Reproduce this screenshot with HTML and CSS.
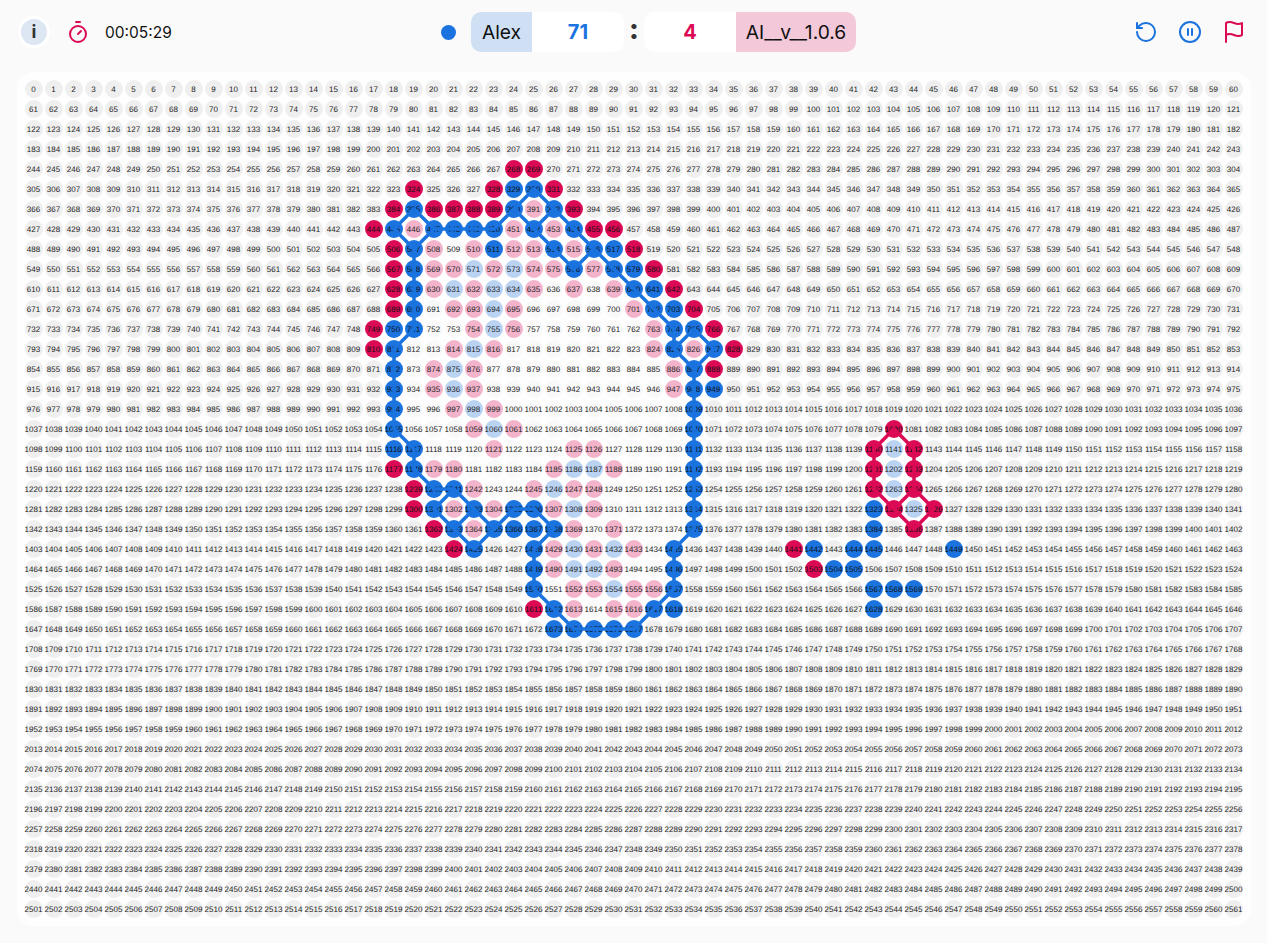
FILE: index.html
```html
<!DOCTYPE html>
<html lang="en">
<head>
<meta charset="utf-8">
<title>Dots</title>
<link rel="stylesheet" href="styles.css">
</head>
<body>
<header class="topbar">
  <div class="status">
    <button class="info-btn" type="button">i</button>
    <svg class="icon icon-red timer" viewBox="0 0 24 24"><line x1="10" x2="14" y1="2" y2="2"/><line x1="12" x2="15" y1="14" y2="11"/><circle cx="12" cy="14" r="8"/></svg>
    <span class="clock">00:05:29</span>
  </div>
  <div class="score">
    <span class="turn-dot"></span>
    <div class="player player-left">
      <span class="name name-blue">Alex</span>
      <span class="points points-blue">71</span>
    </div>
    <span class="colon">:</span>
    <div class="player player-right">
      <span class="points points-red">4</span>
      <span class="name name-red">AI__v__1.0.6</span>
    </div>
  </div>
  <div class="actions">
    <svg class="icon icon-blue" viewBox="0 0 24 24"><path d="M3 12a9 9 0 1 0 9-9 9.75 9.75 0 0 0-6.74 2.74L3 8"/><path d="M3 3v5h5"/></svg>
    <svg class="icon icon-blue" viewBox="0 0 24 24"><circle cx="12" cy="12" r="10"/><line x1="10" x2="10" y1="15" y2="9"/><line x1="14" x2="14" y1="15" y2="9"/></svg>
    <svg class="icon icon-red" viewBox="0 0 24 24"><path d="M4 15s1-1 4-1 5 2 8 2 4-1 4-1V3s-1 1-4 1-5-2-8-2-4 1-4 1z"/><line x1="4" x2="4" y1="22" y2="15"/></svg>
  </div>
</header>
<main class="board">
  <div class="grid" id="grid">
    <svg class="links" id="links" width="1218" height="838" viewBox="0 0 1218 838"></svg>
  </div>
</main>
<script src="board.js"></script>
</body>
</html>
```

FILE: styles.css
```css
* { box-sizing: border-box; }
html, body { margin: 0; height: 100%; }
body {
  background: #fafafa;
  color: #111;
  font-family: Inter, "Liberation Sans", sans-serif;
  overflow: hidden;
}
.topbar {
  display: flex;
  align-items: center;
  justify-content: space-between;
  height: 64px;
  padding: 0 21px 0 18px;
}
.status { display: flex; align-items: center; width: 145px; }
.info-btn {
  flex: none;
  width: 32px;
  height: 32px;
  padding: 0;
  border: 3px solid #fff;
  border-radius: 50%;
  background: #dde6f3;
  color: #333;
  font: 700 18px/1 Inter, sans-serif;
}
.icon {
  width: 24px;
  height: 24px;
  flex: none;
  fill: none;
  stroke-width: 2;
  stroke-linecap: round;
  stroke-linejoin: round;
}
.icon-red { stroke: #dc0a55; }
.icon-blue { stroke: #1a73de; }
.timer { margin-left: 16px; }
.clock { flex: none; margin-left: 15px; font-size: 15.5px; white-space: nowrap; }
.score { display: flex; align-items: center; }
.turn-dot {
  width: 15px;
  height: 15px;
  margin-right: 15px;
  border-radius: 50%;
  background: #1a73de;
}
.player {
  display: flex;
  height: 40px;
  align-items: stretch;
  border-radius: 10px;
  overflow: hidden;
  background: #fff;
}
.name {
  display: flex;
  align-items: center;
  justify-content: center;
  font-size: 19.2px;
}
.name-blue { width: 61px; background: #cfe0f4; }
.name-red { width: 120px; background: #f3c8d9; }
.points {
  display: flex;
  width: 92px;
  align-items: center;
  justify-content: center;
  font-size: 20px;
  font-weight: 700;
}
.points-blue { color: #1a73de; }
.points-red { color: #dc0a55; }
.colon {
  width: 20px;
  height: 40px;
  text-align: center;
  color: #333;
  font-size: 28px;
  font-weight: 800;
  line-height: 34px;
}
.actions { display: flex; gap: 20px; }
.board {
  width: 1234px;
  height: 854px;
  margin: 8px 0 0 16.5px;
  padding: 8px;
  border-radius: 16px;
  background: #fefefe;
}
.grid {
  position: relative;
  display: grid;
  grid-template-columns: repeat(61, 18px);
  grid-auto-rows: 18px;
  gap: 2px;
}
.dot {
  display: flex;
  align-items: center;
  justify-content: center;
  border-radius: 50%;
  background: #efefef;
  color: #222;
  font-family: "Liberation Sans", Arial, sans-serif;
  font-size: 8px;
  text-rendering: geometricPrecision;
  white-space: nowrap;
}
.dot-inside { background: #f9f9f9; }
.dot-blue { background: #1a73de; color: #111; }
.dot-red { background: #dc0a55; color: #111; }
.dot-lost-blue { background: #bad3f3; }
.dot-lost-red { background: #f3b4cb; }
.links {
  position: absolute;
  inset: 0;
  pointer-events: none;
}
.link { stroke-width: 3.5; stroke-linecap: round; }
.link-blue { stroke: #1a73de; }
.link-red { stroke: #dc0a55; }
```

FILE: board.js
```js
var COLS = 61, TOTAL = 2562, PITCH = 20;

var blue = [329,330,385,390,392,445,447,448,449,450,452,454,507,511,514,516,517,568,576,578,579,629,640,641,690,702,703,750,751,764,765,811,825,827,872,887,933,948,949,994,1009,1055,1070,1116,1117,1131,1178,1192,1240,1241,1253,1301,1303,1305,1306,1314,1363,1365,1366,1367,1368,1375,1425,1428,1435,1489,1496,1550,1557,1612,1617,1618,1673,1674,1675,1676,1677,1323,1384,1442,1444,1445,1449,1504,1505,1567,1568,1569,1628];
var red = [268,269,324,328,331,384,386,387,388,389,393,444,455,456,506,518,567,580,628,642,689,704,749,766,810,828,888,1177,1239,1300,1362,1424,1611,1080,1140,1142,1201,1203,1262,1264,1324,1326,1386,1441,1503];
var lostBlue = [571,573,631,633,634,694,755,815,875,936,998,1060,1186,1187,1246,1308,1430,1432,1491,1492,1554,1141,1202,1263,1325];
var lostRed = [391,446,451,453,508,510,512,513,515,569,570,572,574,575,577,630,632,635,637,639,692,693,695,701,754,756,763,814,816,824,826,874,876,886,935,937,947,997,999,1059,1061,1121,1125,1126,1179,1180,1185,1188,1242,1245,1247,1248,1302,1304,1307,1309,1364,1369,1371,1429,1431,1433,1490,1493,1552,1553,1555,1556,1613,1615,1616];
var insideRows = [[507,514],[568,576],[629,640],[690,702],[751,764],[811,825],[872,887],[933,948],[994,1009],[1055,1070],[1117,1131],[1178,1192],[1241,1253],[1306,1314],[1368,1375],[1428,1435],[1489,1496],[1550,1557],[1612,1617]];

var blueChains = [
  [385,445,507,447,385],
  [447,448,449,450,390,330,392,452,390],
  [392,454,516,578,640,702,764,825,887,948,1009,1070,1131,1192,1253,1314,1375,1435,1496,1557,1617,1677,1676,1675,1674,1612,1550,1489,1428,1368,1306,1305,1365,1303,1241,1240,1178,1117,1055,994,933,872,811,751,690,629,568,507],
  [452,514,576,516],
  [825,765,827,887],
  [1241,1301,1363,1425,1365],
  [1303,1363]
];
var redChains = [
  [1080,1140,1201,1262,1324,1386,1326,1264,1203,1142,1080],
  [1324,1264]
];

var classes = {};
function mark(list, name) {
  list.forEach(function (n) { classes[n] = name; });
}
insideRows.forEach(function (r) {
  for (var n = r[0]; n <= r[1]; n++) classes[n] = "dot-inside";
});
mark(blue, "dot-blue");
mark(red, "dot-red");
mark(lostBlue, "dot-lost-blue");
mark(lostRed, "dot-lost-red");

var grid = document.getElementById("grid");
var links = document.getElementById("links");
for (var i = 0; i < TOTAL; i++) {
  var dot = document.createElement("div");
  dot.className = classes[i] ? "dot " + classes[i] : "dot";
  dot.textContent = i;
  grid.insertBefore(dot, links);
}

function center(n) {
  return [(n % COLS) * PITCH + 9, Math.floor(n / COLS) * PITCH + 9];
}
function draw(chains, name) {
  chains.forEach(function (chain) {
    for (var k = 0; k + 1 < chain.length; k++) {
      var a = center(chain[k]), b = center(chain[k + 1]);
      var line = document.createElementNS("http://www.w3.org/2000/svg", "line");
      line.setAttribute("x1", a[0]);
      line.setAttribute("y1", a[1]);
      line.setAttribute("x2", b[0]);
      line.setAttribute("y2", b[1]);
      line.setAttribute("class", "link " + name);
      links.appendChild(line);
    }
  });
}
draw(blueChains, "link-blue");
draw(redChains, "link-red");
```
